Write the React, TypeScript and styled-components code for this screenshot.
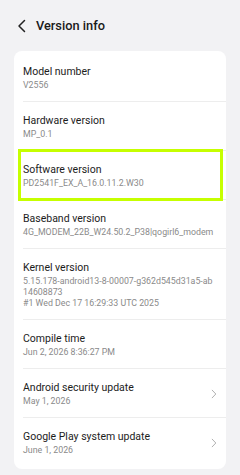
import { FC } from "react";
import styled, { createGlobalStyle } from "styled-components";

type InfoItem = {
  title: string;
  values: string[];
  chevron?: boolean;
  highlight?: boolean;
};

const items: InfoItem[] = [
  { title: "Model number", values: ["V2556"] },
  { title: "Hardware version", values: ["MP_0.1"] },
  {
    title: "Software version",
    values: ["PD2541F_EX_A_16.0.11.2.W30"],
    highlight: true,
  },
  {
    title: "Baseband version",
    values: ["4G_MODEM_22B_W24.50.2_P38|qogirl6_modem"],
  },
  {
    title: "Kernel version",
    values: [
      "5.15.178-android13-8-00007-g362d545d31a5-ab",
      "14608873",
      "#1 Wed Dec 17 16:29:33 UTC 2025",
    ],
  },
  { title: "Compile time", values: ["Jun 2, 2026 8:36:27 PM"] },
  { title: "Android security update", values: ["May 1, 2026"], chevron: true },
  {
    title: "Google Play system update",
    values: ["June 1, 2026"],
    chevron: true,
  },
];

const GlobalStyle = createGlobalStyle`
  html, body {
    margin: 0;
    padding: 0;
    background: #f2f2f4;
  }
  body {
    font-family: Roboto, "Noto Sans", sans-serif;
    -webkit-font-smoothing: antialiased;
  }
`;

const BackIcon: FC = () => (
  <svg width="10" height="14" viewBox="0 0 10 14" fill="none">
    <path
      d="M7.5 1.5L2 7l5.5 5.5"
      stroke="#222"
      strokeWidth="1.5"
      strokeLinecap="round"
      strokeLinejoin="round"
    />
  </svg>
);

const ChevronIcon: FC = () => (
  <svg width="6" height="10" viewBox="0 0 6 10" fill="none">
    <path
      d="M1.2 1.2L4.8 5 1.2 8.8"
      stroke="#b0b0b0"
      strokeWidth="1"
      strokeLinecap="round"
      strokeLinejoin="round"
    />
  </svg>
);

const InfoRow: FC<{ item: InfoItem; last: boolean }> = ({ item, last }) => (
  <Row>
    <RowInner $last={last}>
      <Texts>
        <Title>{item.title}</Title>
        {item.values.map((v) => (
          <Value key={v}>{v}</Value>
        ))}
      </Texts>
      {item.chevron && <ChevronIcon />}
    </RowInner>
    {item.highlight && <Highlight />}
  </Row>
);

export default function App() {
  return (
    <>
      <GlobalStyle />
      <Page>
        <Header>
          <BackButton>
            <BackIcon />
          </BackButton>
          <HeaderTitle>Version info</HeaderTitle>
        </Header>
        <Card>
          {items.map((item, i) => (
            <InfoRow
              key={item.title}
              item={item}
              last={i === items.length - 1}
            />
          ))}
        </Card>
      </Page>
    </>
  );
}

const Page = styled.div`
  width: 240px;
  height: 475px;
  overflow: hidden;
  background: #f2f2f4;
`;

const Header = styled.div`
  height: 51px;
  display: flex;
  align-items: center;
  padding: 0 0 0 17px;
  box-sizing: border-box;
`;

const BackButton = styled.div`
  display: flex;
  align-items: center;
  width: 19px;
  height: 14px;
  margin-top: 1px;
`;

const HeaderTitle = styled.div`
  font-size: 12.8px;
  font-weight: 500;
  color: #1a1a1a;
`;

const Card = styled.div`
  margin: 0 14px;
  padding: 2px 0 3px;
  background: #ffffff;
  border-radius: 8px;
`;

const Row = styled.div`
  position: relative;
  padding-left: 9px;
`;

const RowInner = styled.div<{ $last: boolean }>`
  display: flex;
  align-items: center;
  padding: 11.5px 9px 10px 0;
  border-bottom: ${(p) => (p.$last ? "none" : "1px solid #ededed")};
`;

const Texts = styled.div`
  flex: 1;
  min-width: 0;
`;

const Title = styled.div`
  font-size: 10.5px;
  line-height: 14px;
  margin-bottom: 1.5px;
  color: #1c1c1c;
`;

const Value = styled.div`
  font-size: 8.8px;
  line-height: 11px;
  color: #8a8a8a;
  white-space: nowrap;
`;

const Highlight = styled.div`
  position: absolute;
  left: 4px;
  right: 3px;
  top: -2px;
  bottom: -1px;
  border: 3px solid #c6ff00;
  pointer-events: none;
`;
